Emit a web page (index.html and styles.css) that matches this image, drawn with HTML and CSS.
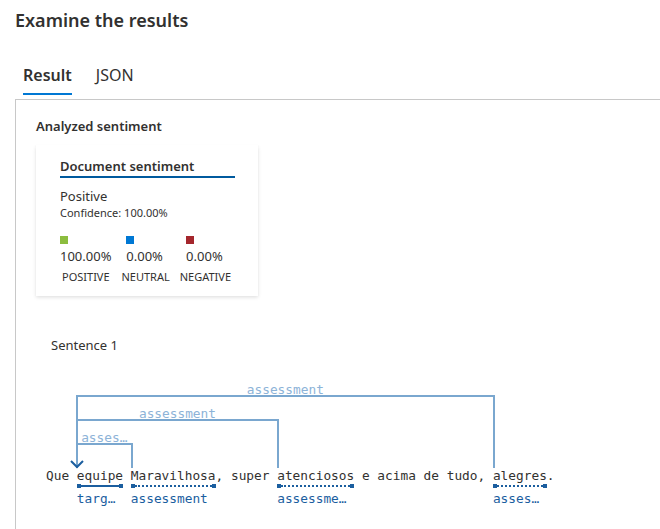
FILE: index.html
```html
<!DOCTYPE html>
<html lang="en">
<head>
<meta charset="utf-8">
<title>Examine the results</title>
<link rel="stylesheet" href="styles.css">
</head>
<body>
<h2 class="title">Examine the results</h2>
<div class="tabs">
  <div class="tab active">Result</div>
  <div class="tab">JSON</div>
</div>
<div class="panel">
  <div class="section-title">Analyzed sentiment</div>
  <div class="card">
    <div class="card-title">Document sentiment</div>
    <div class="sent-label">Positive</div>
    <div class="confidence">Confidence: 100.00%</div>
    <div class="scores">
      <div class="score">
        <div class="score-top"><span class="swatch pos"></span><div class="score-val">100.00%</div></div>
        <div class="score-name">POSITIVE</div>
      </div>
      <div class="score">
        <div class="score-top"><span class="swatch neu"></span><div class="score-val">0.00%</div></div>
        <div class="score-name">NEUTRAL</div>
      </div>
      <div class="score">
        <div class="score-top"><span class="swatch neg"></span><div class="score-val">0.00%</div></div>
        <div class="score-name">NEGATIVE</div>
      </div>
    </div>
  </div>
  <div class="sentence-title">Sentence 1</div>
  <div class="diagram">
    <div class="arc arc-outer"><span class="arc-label">assessment</span></div>
    <div class="arc arc-mid"><span class="arc-label">assessment</span></div>
    <div class="arc arc-inner"><span class="arc-label">asses…</span></div>
    <svg class="arrow" width="14" height="9" viewBox="0 0 14 9"><polyline points="1,1 7,7 13,1" fill="none" stroke="#1b5e9f" stroke-width="2"/></svg>
    <div class="sentence">Que <span class="word"><span class="mark solid"></span><span class="tag">targ…</span>equipe</span> <span class="word"><span class="mark dotted"></span><span class="tag">assessment</span>Maravilhosa</span>, super <span class="word"><span class="mark dotted"></span><span class="tag">assessme…</span>atenciosos</span> e acima de tudo, <span class="word"><span class="mark dotted"></span><span class="tag">asses…</span>alegres</span>.</div>
  </div>
</div>
</body>
</html>
```
FILE: styles.css
```css
* { box-sizing: border-box; }
html, body { margin: 0; padding: 0; background: #fff; }
body {
  font-family: "Noto Sans", "Open Sans", sans-serif;
  color: #323130;
  width: 660px;
  overflow: hidden;
}
.title {
  margin: 0;
  padding: 6px 15px 0;
  font-size: 18px;
  line-height: 28px;
  font-weight: 600;
  color: #323130;
}
.tabs {
  display: flex;
  gap: 24px;
  padding: 30px 0 0 23px;
}
.tab {
  font-size: 16px;
  line-height: 22px;
  padding-bottom: 7px;
  border-bottom: 2px solid transparent;
  color: #323130;
}
.tab.active {
  font-weight: 600;
  border-bottom-color: #0078d4;
}
.panel {
  margin: 4px 0 0 15px;
  border-top: 1px solid #c8c8c8;
  border-left: 1px solid #c8c8c8;
  padding: 16px 0 0 20px;
  height: 440px;
}
.section-title {
  font-size: 13px;
  font-weight: 600;
  line-height: 20px;
  color: #323130;
}
.card {
  margin-top: 9px;
  width: 222px;
  height: 151px;
  background: #fff;
  box-shadow: 0 1.6px 3.6px rgba(0,0,0,0.13), 0 0.3px 0.9px rgba(0,0,0,0.11);
  padding: 12px 0 0 24px;
}
.card-title {
  width: 175px;
  font-size: 13px;
  font-weight: 600;
  line-height: 18px;
  padding-bottom: 1px;
  border-bottom: 2px solid #005a9e;
}
.sent-label {
  margin-top: 9px;
  font-size: 13px;
  line-height: 18px;
}
.confidence {
  font-size: 11px;
  line-height: 16px;
}
.scores {
  display: flex;
  gap: 8px;
  margin-top: 15px;
}
.score {
  display: flex;
  flex-direction: column;
  align-items: center;
}
.score:first-child { align-items: flex-start; }
.score-top { display: flex; flex-direction: column; align-items: flex-start; }
.swatch {
  width: 8px;
  height: 8px;
  display: block;
}
.swatch.pos { background: #8cbd3f; }
.swatch.neu { background: #0078d4; }
.swatch.neg { background: #a4262c; }
.score-val {
  font-size: 13px;
  line-height: 18px;
  margin-top: 3px;
}
.score-name {
  font-size: 11px;
  line-height: 16px;
  margin-top: 4px;
  padding-left: 2px;
}
.sentence-title {
  margin: 40px 0 0 15px;
  font-size: 13px;
  line-height: 18px;
}
.diagram {
  position: relative;
  margin: 0 0 0 10px;
  height: 170px;
  font-family: "DejaVu Sans Mono", "Liberation Mono", monospace;
  font-size: 12.8px;
}
.arc {
  position: absolute;
  left: calc(4ch - 1px);
  bottom: 56px;
  border: 2px solid #7aa7cf;
  border-bottom: none;
}
.arc-outer { width: calc(54ch + 3px); height: 73px; }
.arc-mid { width: calc(26ch + 3px); height: 49px; }
.arc-inner { width: calc(7ch + 3px); height: 25px; }
.arc-label {
  position: absolute;
  left: 0;
  right: 0;
  bottom: calc(100% + 1px);
  text-align: center;
  color: #8db3d8;
  line-height: 13px;
  white-space: nowrap;
}
.arrow {
  position: absolute;
  left: calc(4ch - 7px);
  bottom: 55px;
  display: block;
}
.sentence {
  position: absolute;
  left: 0;
  bottom: 40px;
  white-space: pre;
  color: #323130;
  line-height: 16px;
}
.word { position: relative; display: inline-block; }
.mark {
  position: absolute;
  left: 0;
  right: 0;
  top: 16px;
  height: 4px;
  border-left: 4px solid #1b5e9f;
  border-right: 4px solid #1b5e9f;
}
.mark::after {
  content: "";
  position: absolute;
  left: 0;
  right: 0;
  top: 1px;
  border-top: 2px solid #1b5e9f;
}
.mark.dotted::after { border-top-style: dotted; }
.tag {
  position: absolute;
  left: 0;
  top: 23px;
  color: #1b5e9f;
  line-height: 16px;
  white-space: nowrap;
}
```
